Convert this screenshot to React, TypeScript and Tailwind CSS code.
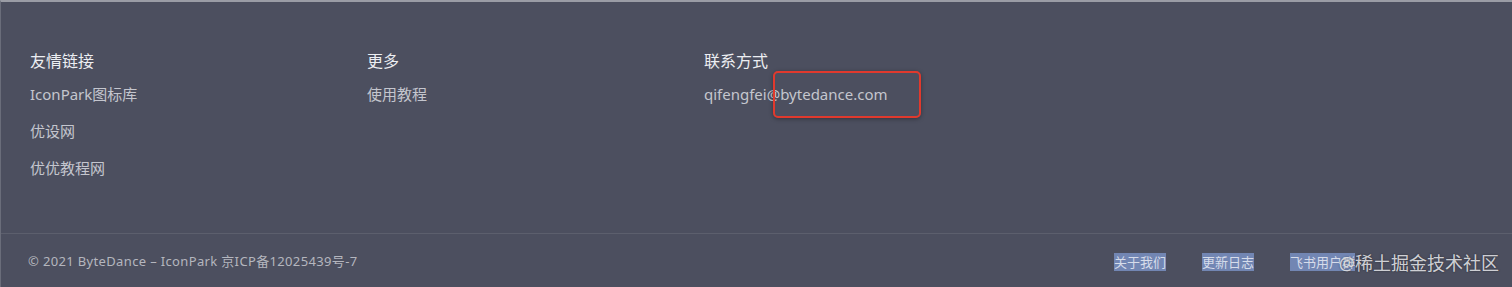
const columns = [
  { title: "友情链接", items: ["IconPark图标库", "优设网", "优优教程网"] },
  { title: "更多", items: ["使用教程"] },
  { title: "联系方式", items: ["qifengfei@bytedance.com"] },
];

const bottomLinks = ["关于我们", "更新日志", "飞书用户群"];

const font = { fontFamily: '"Noto Sans", "Noto Sans CJK SC", sans-serif' };

export default function App() {
  return (
    <div
      className="relative w-[1512px] h-[287px] overflow-hidden bg-[#4c4f5f] border-t-2 border-l border-[#9a9ca5] border-l-[#6a6d7a]"
      style={font}
    >
      {/* Link columns */}
      <section className="h-[231px] pl-[29px] pt-[47px] flex">
        {columns.map((col) => (
          <div key={col.title} className="w-[337px] flex flex-col">
            <h3 className="text-[16px] leading-[24px] text-[#eceef2]">{col.title}</h3>
            <ul className="mt-[9px] flex flex-col gap-[13px]">
              {col.items.map((item) => (
                <li key={item} className="text-[15px] leading-[24px] text-[#c4c6ce]">
                  {item}
                </li>
              ))}
            </ul>
          </div>
        ))}
      </section>

      <div className="h-px bg-[#5c5f6d]" />

      {/* Bottom bar */}
      <footer className="h-[53px] pl-[27px] pr-[157px] pt-[3px] flex items-center justify-between">
        <span className="text-[13px] tracking-[0.35px] text-[#b4b6be]">
          © 2021 ByteDance – IconPark 京ICP备12025439号-7
        </span>
        <ul className="flex gap-[36px]">
          {bottomLinks.map((link) => (
            <li
              key={link}
              className="text-[13px] leading-[18px] bg-[#7286b3] text-[#d6dcea]"
            >
              {link}
            </li>
          ))}
        </ul>
      </footer>

      {/* Watermark */}
      <span className="absolute right-[13px] bottom-[12px] text-[18px] leading-[24px] text-[#e4e5e9]/90 [text-shadow:0_0_2px_rgba(0,0,0,0.5)]">
        @稀土掘金技术社区
      </span>

      {/* Annotation box */}
      <div className="absolute left-[772px] top-[69px] w-[148px] h-[47px] border-2 border-[#e0392d] rounded-[5px] shadow-[0_1px_4px_rgba(0,0,0,0.35)]" />
    </div>
  );
}
